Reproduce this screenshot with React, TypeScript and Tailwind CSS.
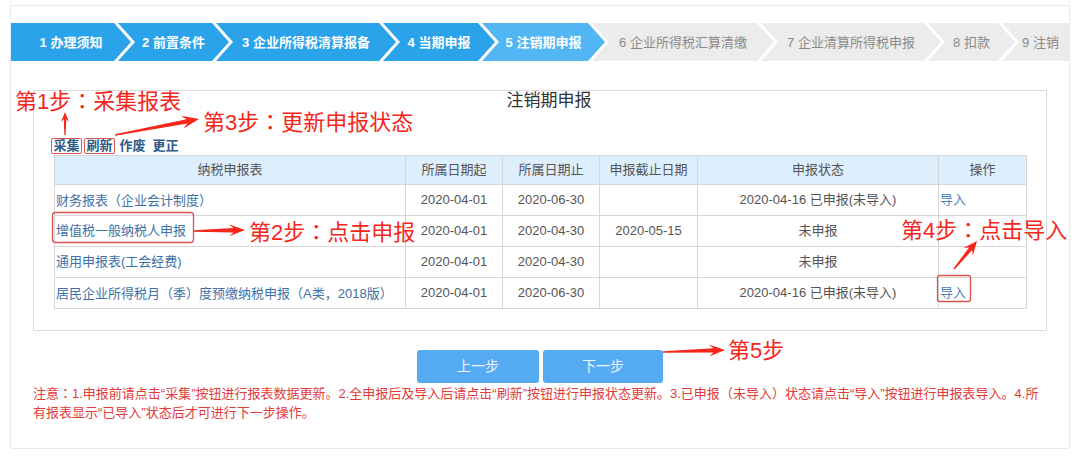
import React from "react";

type Step = { label: string; cls: string };

const steps: Step[] = [
  { label: "1 办理须知", cls: "w-[120px] bg-[#2ba3ea] text-white font-bold [clip-path:polygon(0_0,calc(100%_-_17px)_0,100%_50%,calc(100%_-_17px)_100%,0_100%)]" },
  { label: "2 前置条件", cls: "w-[111px] -ml-[13px] bg-[#2ba3ea] text-white font-bold [clip-path:polygon(0_0,calc(100%_-_17px)_0,100%_50%,calc(100%_-_17px)_100%,0_100%,17px_50%)]" },
  { label: "3 企业所得税清算报备", cls: "w-[180px] -ml-[13px] bg-[#2ba3ea] text-white font-bold [clip-path:polygon(0_0,calc(100%_-_17px)_0,100%_50%,calc(100%_-_17px)_100%,0_100%,17px_50%)]" },
  { label: "4 当期申报", cls: "w-[112px] -ml-[13px] bg-[#2ba3ea] text-white font-bold [clip-path:polygon(0_0,calc(100%_-_17px)_0,100%_50%,calc(100%_-_17px)_100%,0_100%,17px_50%)]" },
  { label: "5 注销期申报", cls: "w-[123px] -ml-[13px] bg-[#52b6f4] text-white font-bold [clip-path:polygon(0_0,calc(100%_-_17px)_0,100%_50%,calc(100%_-_17px)_100%,0_100%,17px_50%)]" },
  { label: "6 企业所得税汇算清缴", cls: "w-[182px] -ml-[13px] bg-[#ececec] text-[#8a8a8a] [clip-path:polygon(0_0,calc(100%_-_17px)_0,100%_50%,calc(100%_-_17px)_100%,0_100%,17px_50%)]" },
  { label: "7 企业清算所得税申报", cls: "w-[180px] -ml-[13px] bg-[#ececec] text-[#8a8a8a] [clip-path:polygon(0_0,calc(100%_-_17px)_0,100%_50%,calc(100%_-_17px)_100%,0_100%,17px_50%)]" },
  { label: "8 扣款", cls: "w-[87px] -ml-[13px] bg-[#ececec] text-[#8a8a8a] [clip-path:polygon(0_0,calc(100%_-_17px)_0,100%_50%,calc(100%_-_17px)_100%,0_100%,17px_50%)]" },
  { label: "9 注销", cls: "flex-1 -ml-[13px] bg-[#ececec] text-[#8a8a8a] pl-[10px] [clip-path:polygon(0_0,100%_0,100%_100%,0_100%,17px_50%)]" },
];

type Row = { name: string; start: string; end: string; deadline: string; status: string; op: string };

const rows: Row[] = [
  { name: "财务报表（企业会计制度）", start: "2020-04-01", end: "2020-06-30", deadline: "", status: "2020-04-16 已申报(未导入)", op: "导入" },
  { name: "增值税一般纳税人申报", start: "2020-04-01", end: "2020-04-30", deadline: "2020-05-15", status: "未申报", op: "" },
  { name: "通用申报表(工会经费)", start: "2020-04-01", end: "2020-04-30", deadline: "", status: "未申报", op: "" },
  { name: "居民企业所得税月（季）度预缴纳税申报（A类，2018版）", start: "2020-04-01", end: "2020-06-30", deadline: "", status: "2020-04-16 已申报(未导入)", op: "导入" },
];

// Fullwidth punctuation rendered centred (as in the reference font)
function P({ text }: { text: string }) {
  const parts = text.split(/([（）：])/);
  return (
    <>
      {parts.map((p, i) =>
        p === "（" || p === "）" || p === "：" ? (
          <span key={i} className="font-['Noto_Sans_CJK_TC',sans-serif]">
            {p}
          </span>
        ) : (
          <React.Fragment key={i}>{p}</React.Fragment>
        )
      )}
    </>
  );
}

function arrowPoints(
  tx: number,
  ty: number,
  hx: number,
  hy: number,
  L: number,
  W: number,
  w1: number,
  w0: number
): string {
  const dx = hx - tx;
  const dy = hy - ty;
  const len = Math.hypot(dx, dy);
  const ux = dx / len;
  const uy = dy / len;
  const nx = -uy;
  const ny = ux;
  const bx = hx - ux * L * 0.72;
  const by = hy - uy * L * 0.72;
  const wx = hx - ux * L;
  const wy = hy - uy * L;
  const pts: [number, number][] = [
    [tx + nx * w0, ty + ny * w0],
    [bx + nx * w1, by + ny * w1],
    [wx + nx * W, wy + ny * W],
    [hx, hy],
    [wx - nx * W, wy - ny * W],
    [bx - nx * w1, by - ny * w1],
    [tx - nx * w0, ty - ny * w0],
  ];
  return pts.map((p) => `${p[0].toFixed(2)},${p[1].toFixed(2)}`).join(" ");
}

const arrows = [
  arrowPoints(65, 135, 65, 112, 10, 4, 1.3, 0.6),
  arrowPoints(115, 135, 199, 119, 17, 6.5, 2.2, 0.7),
  arrowPoints(194, 231, 245, 230, 16, 6, 2.2, 0.7),
  arrowPoints(954, 269, 977, 241, 14, 6, 2, 0.7),
  arrowPoints(663, 352, 725, 350, 16, 6, 2.2, 0.7),
];

export default function App() {
  return (
    <div className="relative w-[1080px] h-[459px] bg-white overflow-hidden font-['Liberation_Sans','Noto_Sans_CJK_SC',sans-serif]">
      <div className="ml-[10px] mt-[5px] w-[1060px] h-[444px] border border-[#e3ebf4] flex flex-col">
        {/* step bar */}
        <div className="mt-[17px] h-[38px] flex">
          {steps.map((s) => (
            <div key={s.label} className={`h-[38px] flex items-center justify-center text-[13px] leading-none whitespace-nowrap ${s.cls}`}>
              {s.label}
            </div>
          ))}
        </div>

        {/* panel */}
        <div className="mt-[29px] mx-[22px] h-[241px] border border-[#dadada] flex flex-col">
          <div className="mt-[1px] h-[18px] leading-[18px] text-[17px] text-[#333] text-center pl-[18px]">注销期申报</div>
          <div className="mt-[28px] ml-[17px] h-[16px] flex gap-[2px] text-[13px] leading-[14px] font-bold text-[#2d5b8c]">
            <span className="border border-[#d9534f] rounded-[2px] px-[1.5px]">采集</span>
            <span className="border border-[#d9534f] rounded-[2px] px-[1.5px]">刷新</span>
            <span className="border border-transparent px-[1.5px]">作废</span>
            <span className="border border-transparent px-[1.5px]">更正</span>
          </div>
          <div className="mt-[1px] ml-[20px]">
            <table className="w-[972px] border-collapse table-fixed text-[13px] text-[#555]">
              <colgroup>
                <col className="w-[351px]" />
                <col className="w-[97px]" />
                <col className="w-[97px]" />
                <col className="w-[98px]" />
                <col className="w-[241px]" />
                <col className="w-[88px]" />
              </colgroup>
              <thead>
                <tr className="h-[29px] bg-[#ddeefc]">
                  <th className="border border-[#d6d6d6] font-normal">纳税申报表</th>
                  <th className="border border-[#d6d6d6] font-normal">所属日期起</th>
                  <th className="border border-[#d6d6d6] font-normal">所属日期止</th>
                  <th className="border border-[#d6d6d6] font-normal">申报截止日期</th>
                  <th className="border border-[#d6d6d6] font-normal">申报状态</th>
                  <th className="border border-[#d6d6d6] font-normal">操作</th>
                </tr>
              </thead>
              <tbody>
                {rows.map((r) => (
                  <tr key={r.name} className="h-[31px]">
                    <td className="border border-[#d6d6d6] pl-[1px] text-left text-[#3e71a7] whitespace-nowrap">
                      <P text={r.name} />
                    </td>
                    <td className="border border-[#d6d6d6] text-center">{r.start}</td>
                    <td className="border border-[#d6d6d6] text-center">{r.end}</td>
                    <td className="border border-[#d6d6d6] text-center">{r.deadline}</td>
                    <td className="border border-[#d6d6d6] text-center">{r.status}</td>
                    <td className="border border-[#d6d6d6] pl-[1px] text-left text-[#4a82bd]">{r.op}</td>
                  </tr>
                ))}
              </tbody>
            </table>
          </div>
        </div>

        {/* buttons */}
        <div className="mt-[19px] flex justify-center gap-[4px]">
          <button className="w-[122px] h-[33px] rounded-[3px] bg-[#55abf2] text-[14px] text-[#eef6ff]">上一步</button>
          <button className="w-[120px] h-[33px] rounded-[3px] bg-[#55abf2] text-[14px] text-[#eef6ff]">下一步</button>
        </div>

        {/* notice */}
        <div className="ml-[22px] text-[13px] leading-[19px] text-[#e23a3a]">
          <div className="whitespace-nowrap">
            <P text="注意：1.申报前请点击“采集”按钮进行报表数据更新。2.全申报后及导入后请点击“刷新”按钮进行申报状态更新。3.已申报（未导入）状态请点击“导入”按钮进行申报表导入。4.所" />
          </div>
          <div className="whitespace-nowrap">有报表显示“已导入”状态后才可进行下一步操作。</div>
        </div>
      </div>

      {/* annotation overlay */}
      <svg className="absolute left-0 top-0 pointer-events-none" width="1080" height="459" viewBox="0 0 1080 459">
        <rect x="52.5" y="212.5" width="141" height="30" rx="3" fill="none" stroke="#d9534f" strokeWidth="1.3" />
        <rect x="937.5" y="275.5" width="33" height="26" rx="2" fill="none" stroke="#d9534f" strokeWidth="1.3" />
        {arrows.map((p, i) => (
          <polygon key={i} points={p} fill="#f5261b" />
        ))}
      </svg>
      <div className="absolute left-[15px] top-[88px] text-[22px] leading-[22px] text-[#f5261b] whitespace-nowrap">
        <P text="第1步：采集报表" />
      </div>
      <div className="absolute left-[203px] top-[109px] text-[22px] leading-[22px] text-[#f5261b] whitespace-nowrap">
        <P text="第3步：更新申报状态" />
      </div>
      <div className="absolute left-[249px] top-[219px] text-[22px] leading-[22px] text-[#f5261b] whitespace-nowrap">
        <P text="第2步：点击申报" />
      </div>
      <div className="absolute left-[901px] top-[217px] text-[22px] leading-[22px] text-[#f5261b] whitespace-nowrap">
        <P text="第4步：点击导入" />
      </div>
      <div className="absolute left-[728px] top-[340px] text-[22px] leading-[22px] text-[#f5261b] whitespace-nowrap">第5步</div>
    </div>
  );
}
